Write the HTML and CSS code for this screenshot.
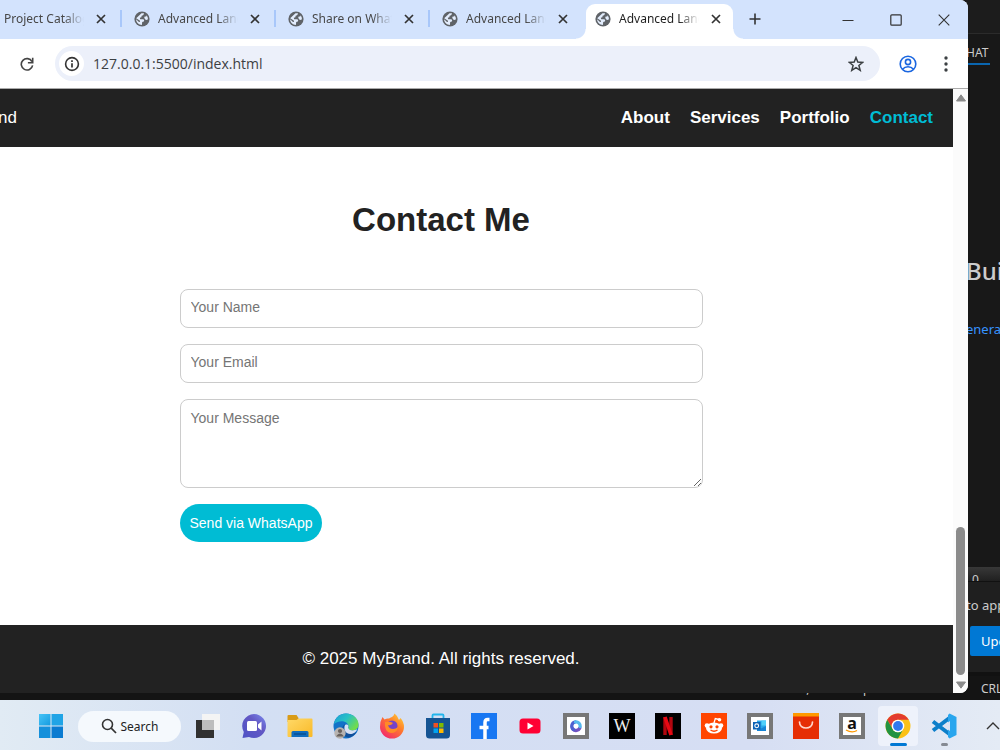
FILE: index.html
```html
<!DOCTYPE html>
<html lang="en">
<head>
<meta charset="utf-8">
<title>Advanced Landing Page</title>
<link rel="stylesheet" href="styles.css">
</head>
<body>
<svg class="defs" aria-hidden="true">
  <symbol id="globe" viewBox="0 0 16 16"><circle cx="8" cy="8" r="7.600" fill="#5f6368"/><path d="M7.500 2.200L10 2.300C9.800 3.800 9 4.600 7.600 4.700L7.400 6.300 5.800 6.700 6.200 8.200 9.300 8.300C10.300 9 10.400 10 9.800 10.600L8.200 11 7.900 13.900C4.800 13.900 2.200 11.400 2.100 8.300L5 10.900 6 10.800 6 9.700 2.200 7.200ZM12.400 4.200C13.500 5.300 14 6.700 13.900 8.300L12.800 8.900 11.200 8.400 10.200 6.700 10.700 5.500 12.300 5.400Z" fill="#e3edfd"/></symbol>
  <symbol id="cross" viewBox="0 0 10 10"><path d="M1 1l8 8M9 1L1 9" stroke="currentColor" stroke-width="1.700" fill="none"/></symbol>
</svg>
<div class="desktop">
  <section class="editor" aria-label="Code editor">
    <aside class="panel">
      <div class="panel-title"></div>
      <div class="panel-head"><span class="panel-tab">HAT</span></div>
      <div class="welcome">
        <h2 class="welcome-title">Bui</h2>
        <a class="welcome-link" href="#generate">enerat</a>
      </div>
      <div class="panel-input">0</div>
      <div class="notice">
        <p class="notice-text">to app</p>
        <button class="notice-button" type="button">Upd</button>
      </div>
    </aside>
    <div class="status"><span>Ln 283, Col 8</span><span>Spaces: 4</span><span>UTF-8</span><span class="eol">CRL</span></div>
  </section>

  <section class="browser" aria-label="Browser window">
    <div class="tabs">
      <div class="tab first"><span class="tab-label">Project Catalog</span><button class="tab-close" aria-label="Close tab"><svg><use href="#cross"/></svg></button></div>
      <div class="tab"><svg class="favicon"><use href="#globe"/></svg><span class="tab-label">Advanced Land</span><button class="tab-close" aria-label="Close tab"><svg><use href="#cross"/></svg></button></div>
      <div class="tab"><svg class="favicon"><use href="#globe"/></svg><span class="tab-label">Share on What</span><button class="tab-close" aria-label="Close tab"><svg><use href="#cross"/></svg></button></div>
      <div class="tab plain"><svg class="favicon"><use href="#globe"/></svg><span class="tab-label">Advanced Land</span><button class="tab-close" aria-label="Close tab"><svg><use href="#cross"/></svg></button></div>
      <div class="tab active"><svg class="favicon"><use href="#globe"/></svg><span class="tab-label">Advanced Land</span><button class="tab-close" aria-label="Close tab"><svg><use href="#cross"/></svg></button></div>
      <button class="new-tab" aria-label="New tab"><svg width="12" height="12" viewBox="0 0 12 12"><path d="M6 .5v11M.5 6h11" stroke="#333" stroke-width="1.600"/></svg></button>
      <div class="window-controls">
        <button aria-label="Minimize"><svg width="12" height="12" viewBox="0 0 12 12"><path d="M.5 6.500h11" stroke="#333" stroke-width="1.200"/></svg></button>
        <button aria-label="Maximize"><svg width="12" height="12" viewBox="0 0 12 12"><rect x=".8" y=".8" width="10.400" height="10.400" rx="1" fill="none" stroke="#333" stroke-width="1.200"/></svg></button>
        <button aria-label="Close"><svg width="12" height="12" viewBox="0 0 12 12"><path d="M.7 .7l10.600 10.600M11.300 .7L.7 11.300" stroke="#333" stroke-width="1.100"/></svg></button>
      </div>
    </div>
    <div class="toolbar">
      <button class="tool reload" aria-label="Reload"><svg width="14" height="14" viewBox="0 0 14 14"><path d="M12 4.600A5.700 5.700 0 1 0 12.600 8.300" fill="none" stroke="#444" stroke-width="1.600"/><path d="M12.700 .8v5H7.900" fill="none" stroke="#444" stroke-width="1.600"/></svg></button>
      <div class="omnibox">
        <button class="site-info" aria-label="Site information"><svg width="16" height="16" viewBox="0 0 16 16"><circle cx="8" cy="8" r="6.400" fill="none" stroke="#333" stroke-width="1.600"/><path d="M8 7.200v4.300M8 4.300v1.700" stroke="#333" stroke-width="1.700"/></svg></button>
        <input class="address" aria-label="Address" value="127.0.0.1:5500/index.html">
        <button class="tool star" aria-label="Bookmark"><svg width="16" height="16" viewBox="0 0 16 16"><path d="M8 1.500l1.800 4.600 4.900.3-3.800 3.100 1.300 4.800L8 11.600l-4.200 2.700 1.300-4.800L1.300 6.400l4.900-.3z" fill="none" stroke="#3c4043" stroke-width="1.500"/></svg></button>
      </div>
      <button class="tool avatar" aria-label="Profile"><svg width="18" height="18" viewBox="0 0 18 18" fill="none" stroke="#1a66e0" stroke-width="1.600"><circle cx="9" cy="9" r="7.800"/><circle cx="9" cy="7" r="2.600"/><path d="M3.500 14.200c3-3.200 8-3.200 11 0"/></svg></button>
      <button class="tool menu" aria-label="Menu"><svg width="4" height="16" viewBox="0 0 4 16" fill="#3c4043"><circle cx="2" cy="2" r="1.700"/><circle cx="2" cy="8" r="1.700"/><circle cx="2" cy="14" r="1.700"/></svg></button>
    </div>
    <div class="viewport">
      <div class="page-clip">
        <div class="page">
          <header class="site-header">
            <span class="brand">MyBrand</span>
            <nav class="site-nav"><a href="#about">About</a><a href="#services">Services</a><a href="#portfolio">Portfolio</a><a class="current" href="#contact">Contact</a></nav>
          </header>
          <main class="contact">
            <h1 class="contact-title">Contact Me</h1>
            <form class="contact-form">
              <input class="field" type="text" placeholder="Your Name" aria-label="Your Name">
              <input class="field" type="email" placeholder="Your Email" aria-label="Your Email">
              <textarea class="field message" placeholder="Your Message" aria-label="Your Message"></textarea>
              <button class="send" type="button">Send via WhatsApp</button>
            </form>
          </main>
          <footer class="site-footer">© 2025 MyBrand. All rights reserved.</footer>
        </div>
      </div>
      <div class="scrollbar" aria-hidden="true">
        <svg width="12" height="8" viewBox="0 0 12 8"><path d="M6 .8L10.500 7h-9z" fill="#8b8b8b" stroke="#8b8b8b" stroke-linejoin="round"/></svg>
        <div class="thumb"></div>
        <svg width="12" height="8" viewBox="0 0 12 8"><path d="M6 7.200L10.500 1h-9z" fill="#8b8b8b" stroke="#8b8b8b" stroke-linejoin="round"/></svg>
      </div>
    </div>
  </section>
</div>

<footer class="taskbar">
  <button class="app" aria-label="Start"><svg viewBox="0 0 26 26"><defs><linearGradient id="win" x1="0" y1="0" x2="1" y2="1" gradientUnits="objectBoundingBox"><stop offset="0" stop-color="#46c4f7"/><stop offset="1" stop-color="#149be0"/></linearGradient></defs><path d="M1 1h11.500v11.500H1z" fill="url(#win)"/><path d="M13.500 1H25v11.500H13.500z" fill="#20a4e6"/><path d="M1 13.500h11.500V25H1z" fill="#1590db"/><path d="M13.500 13.500H25V25H13.500z" fill="#0a7bd1"/></svg></button>
  <button class="search"><svg width="16" height="16" viewBox="0 0 16 16"><circle cx="6.500" cy="6.500" r="5" fill="none" stroke="#333" stroke-width="1.600"/><path d="M10.200 10.200L15 15" stroke="#333" stroke-width="1.700"/></svg><span>Search</span></button>
  <button class="app" aria-label="Task view"><svg viewBox="0 0 26 26"><path d="M1 7h18v18H1z" fill="#303030"/><path d="M7 1h18v16H7z" fill="#f4f4f4"/><path d="M7 7h12v10H7z" fill="#bdbdbd"/></svg></button>
  <button class="app" aria-label="Chat"><svg viewBox="0 0 26 26"><defs><linearGradient id="chat" x1="0" y1="1" x2="1" y2="0"><stop stop-color="#4e52c5"/><stop offset=".6" stop-color="#6358c4"/><stop offset="1" stop-color="#7b8df0"/></linearGradient></defs><path d="M13 1a12 12 0 1 1-5 22.900L1.500 25l1.300-6A12 12 0 0 1 13 1z" fill="url(#chat)"/><rect x="6" y="8" width="10" height="10" rx="1.500" fill="#fff"/><path d="M17 11.500l3.500-3v9l-3.500-3z" fill="#fff"/></svg></button>
  <button class="app" aria-label="Files"><svg viewBox="0 0 26 26"><defs><linearGradient id="fold" x1="0" y1="0" x2="1" y2="1"><stop stop-color="#ffd968"/><stop offset="1" stop-color="#f9b927"/></linearGradient></defs><path d="M.5 3q0-1 1-1h8l2 3v4H.5z" fill="#d99b16"/><path d="M.5 7h9l2-1.500h13q1 0 1 1V23q0 1-1 1H1.500q-1 0-1-1z" fill="url(#fold)"/><path d="M4.500 24v-4.500q0-1.500 1.500-1.500h14q1.500 0 1.500 1.500V24z" fill="#0f6cbd"/><path d="M7 21h12" stroke="#0a4f91" stroke-width="1.500"/></svg></button>
  <button class="app" aria-label="Edge"><svg viewBox="0 0 26 26"><defs><linearGradient id="edge" x1="0" y1="0" x2="1" y2=".6"><stop stop-color="#1d9bd7"/><stop offset=".5" stop-color="#26c1c6"/><stop offset="1" stop-color="#72dc4b"/></linearGradient></defs><circle cx="13" cy="13" r="12.500" fill="#1272c8"/><path d="M1 11C2 4.500 7 .5 13 .5c7 0 12.500 5 12.500 11 0 4-3 6-6.500 6-2.500 0-4.500-1-3.500-3C16.500 9 8 5.500 1 11z" fill="url(#edge)"/><path d="M13 11c-2 1-2.500 3-2 5 .8 4 5.500 6 12.500 3-3 6-10 7-13 3-3-4-1.500-10 2.500-11z" fill="#10509b"/><path d="M12 12c3-1.500 4 1 3.200 2.500 0 3 5.500 4 9 1.500-1 3.500-4 5-7 5-4 0-7-4-5.200-9z" fill="#d6e0f3"/><circle cx="7" cy="20" r="5.700" fill="#b7b3b0"/><circle cx="7" cy="18" r="2.100" fill="#68625e"/><path d="M3 23.500q4-6 8 0z" fill="#68625e"/></svg></button>
  <button class="app" aria-label="Firefox"><svg viewBox="0 0 26 26"><defs><linearGradient id="fox" x1="1" y1="0" x2=".2" y2="1"><stop stop-color="#ffdf38"/><stop offset=".45" stop-color="#ff7c2b"/><stop offset="1" stop-color="#f2256e"/></linearGradient></defs><path d="M3.500 4l2 2.500Q8 5 10 5.500 12 4 13 4q2-1.500 2.500-3.500Q19 3 20 7l1.500-2Q25 9 25 14A12 11.500 0 0 1 1 14q0-6 2.500-10z" fill="url(#fox)"/><circle cx="13" cy="13" r="5.500" fill="#7542c9"/><path d="M6 9q5-1 8 1-2 3-5 2 1 4 5 4 3 0 5-2-1 6-7 6-7-1-6-11z" fill="#ff8b27"/></svg></button>
  <button class="app" aria-label="Store"><svg viewBox="0 0 26 26"><path d="M7.500 6V2.500q0-1 1-1h9q1 0 1 1V6" fill="none" stroke="#22b5ec" stroke-width="1.800"/><path d="M1 5h24v17q0 3.500-3.500 3.500h-17Q1 25.500 1 22z" fill="#155493"/><path d="M8.500 10H13v4.500H8.500z" fill="#f25022"/><path d="M14 10h4.500v4.500H14z" fill="#7fba00"/><path d="M8.500 15.500H13V20H8.500z" fill="#00a4ef"/><path d="M14 15.500h4.500V20H14z" fill="#ffb900"/></svg></button>
  <button class="app" aria-label="Facebook"><svg viewBox="0 0 26 26"><path d="M0 0h26v26H0z" fill="#1877f2"/><path d="M18.500 6.500h-1.800q-2.700 0-2.700 3V26M8.500 14.500h9" fill="none" stroke="#fff" stroke-width="3.500"/></svg></button>
  <button class="app" aria-label="YouTube"><svg viewBox="0 0 26 26"><rect x="2.500" y="5.500" width="21" height="15" rx="3.500" fill="#ff0033"/><path d="M10.500 9.500l6 3.500-6 3.500z" fill="#fff"/></svg></button>
  <button class="app" aria-label="Microsoft 365"><svg viewBox="0 0 26 26"><path d="M0 0h26v26H0z" fill="#777"/><path d="M4 4h18v18H4z" fill="#fff"/><g fill="none" stroke-width="3.300" stroke-linejoin="round" stroke-linecap="round"><path d="M16.800 15A4.200 4.200 0 0 1 10 16.300" stroke="#7252c2"/><path d="M10.500 16.500A4.200 4.200 0 0 1 12 9" stroke="#4e5fd0"/><path d="M12.500 9a4.200 4.200 0 0 1 4.700 4.600" stroke="#55b8ed"/></g></svg></button>
  <button class="app" aria-label="Wikipedia"><span class="wiki">W</span></button>
  <button class="app" aria-label="Netflix"><svg viewBox="0 0 26 26"><path d="M0 0h26v26H0z" fill="#000"/><path d="M10 4v18M16 4v18" stroke="#b1060f" stroke-width="3.400"/><path d="M10 4l6 18" stroke="#e50914" stroke-width="3.600"/></svg></button>
  <button class="app" aria-label="Reddit"><svg viewBox="0 0 26 26"><path d="M0 0h26v26H0z" fill="#ff4500"/><path d="M13 10l1.300-4.500L18 6.500" fill="none" stroke="#fff" stroke-width="1.300"/><circle cx="18.500" cy="6.800" r="1.800" fill="#fff"/><circle cx="6" cy="12.500" r="2.300" fill="#fff"/><circle cx="20" cy="12.500" r="2.300" fill="#fff"/><ellipse cx="13" cy="15" rx="8" ry="5.600" fill="#fff"/><circle cx="10" cy="13.800" r="1.600" fill="#ff4500"/><circle cx="16" cy="13.800" r="1.600" fill="#ff4500"/><path d="M9.500 17q3.500 2.500 7 0" fill="none" stroke="#ff4500" stroke-width="1.300"/></svg></button>
  <button class="app" aria-label="Outlook"><svg viewBox="0 0 26 26"><path d="M0 0h26v26H0z" fill="#777"/><path d="M4 4h18v18H4z" fill="#fff"/><path d="M10 7.500h9V18h-9z" fill="#28a8ea"/><path d="M14.500 7.500H19v5h-4.500z" fill="#50d0fa"/><path d="M10 14l4 1.500 5-2.500v5h-9z" fill="#1484d6"/><path d="M6 9h7.500v7.500H6z" fill="#0b62b5"/><circle cx="9.700" cy="12.800" r="1.900" fill="none" stroke="#fff" stroke-width="1.100"/></svg></button>
  <button class="app" aria-label="AliExpress"><svg viewBox="0 0 26 26"><path d="M0 0h26v26H0z" fill="#e62e04"/><path d="M0 0h26v3.500H0z" fill="#ff9900"/><path d="M6.500 9c0 8 13 8 13 0" fill="none" stroke="#ffd7ca" stroke-width="1.700" stroke-linecap="round"/></svg></button>
  <button class="app" aria-label="Amazon"><span class="amazon">a<svg width="14" height="4" viewBox="0 0 14 4"><path d="M1 1q6 3.500 11 .5" fill="none" stroke="#ff9900" stroke-width="1.400"/></svg></span></button>
  <button class="app running focused" aria-label="Chrome"><svg viewBox="0 0 26 26"><circle cx="13" cy="13" r="12.500" fill="#fbc116"/><path d="M2.200 6.800A12.500 12.500 0 0 1 23.800 6.800H13a6.200 6.200 0 0 0-5.400 9.300z" fill="#e33b2e"/><path d="M2.200 6.800A12.500 12.500 0 0 0 13 25.500L18.400 16.100a6.200 6.200 0 0 1-10.800 0z" fill="#229342"/><circle cx="13" cy="13" r="6.300" fill="#fff"/><circle cx="13" cy="13" r="4.900" fill="#3079ee"/></svg></button>
  <button class="app running" aria-label="Visual Studio Code"><svg viewBox="0 0 26 26"><path d="M2 8.500L19 21.500M2 17.500L19 4.500" stroke="#0d7fca" stroke-width="4"/><path d="M18.500.5L25.500 4v18l-7 3.500L17 24V2z" fill="#29a6ee"/><path d="M19 8v10l-7-5z" fill="#dce3f4"/></svg></button>
  <button class="tray" aria-label="Show hidden icons"><svg width="14" height="10" viewBox="0 0 14 10"><path d="M1 8l6-6 6 6" fill="none" stroke="#333" stroke-width="1.400"/></svg></button>
</footer>
</body>
</html>
```
FILE: styles.css
```css
* { box-sizing: border-box; }
body {
  margin: 0;
  height: 100vh;
  display: flex;
  flex-direction: column;
  overflow: hidden;
  font-family: "Noto Sans", "Open Sans", sans-serif;
  font-size: 12px;
}
button { padding: 0; border: 0; background: none; color: inherit; font: inherit; }
svg { display: block; }
.defs { position: absolute; width: 0; height: 0; }
.desktop { position: relative; flex: 1; min-height: 0; }

/* Editor behind the browser */
.editor {
  position: absolute;
  inset: 0;
  display: flex;
  flex-direction: column;
  background: #181818;
  color: #ccc;
  white-space: nowrap;
  overflow: hidden;
}
.panel { flex: 1; display: flex; flex-direction: column; width: 34px; margin-left: auto; overflow: hidden; }
.panel-title { height: 34px; background: #1c1c1c; border-bottom: 1px solid #2b2b2b; }
.panel-head { height: 31px; display: flex; }
.panel-tab { width: 24px; padding-top: 10px; line-height: 18px; border-bottom: 2px solid #0a66b0; }
.welcome { flex: 1; padding-top: 190px; }
.welcome-title { margin: 0 0 32px; font-size: 24px; font-weight: 500; line-height: 32px; }
.welcome-link { display: block; font-size: 13px; line-height: 20px; color: #3794ff; text-decoration: none; }
.panel-input {
  height: 15px;
  padding: 5px 0 0 6px;
  font-size: 12px;
  line-height: 16px;
  overflow: hidden;
  background: linear-gradient(#383838, #202020);
  border-bottom: 1px solid #111;
}
.notice { height: 90px; padding-top: 13px; background: #1f1f1f; font-size: 13px; }
.notice-text { margin: 0 0 11px; line-height: 20px; }
.notice-button { display: block; height: 30px; width: 40px; margin-left: 4px; padding-left: 11px; text-align: left; background: #0078d4; color: #fff; border-radius: 2px; }
.status {
  height: 28px;
  display: flex;
  justify-content: flex-end;
  align-items: center;
  gap: 16px;
  border-top: 4px solid #111;
  background: #141414;
}
.eol { width: 19px; margin-left: 8px; overflow: hidden; }

/* Browser window */
.browser {
  position: absolute;
  inset: 0 32px 7px 0;
  display: flex;
  flex-direction: column;
  overflow: hidden;
  background: #fff;
  border-radius: 0 8px 8px 0;
}
.tabs { display: flex; height: 39px; background: #d3e3fd; color: #474747; }
.tab { position: relative; flex: 0 0 154px; display: flex; align-items: center; height: 37px; padding-left: 12px; }
.tab::after { content: ""; position: absolute; right: 0; top: 10px; width: 2px; height: 17px; background: #a8c7fa; }
.tab.plain { flex-basis: 156px; }
.tab.plain::after { display: none; }
.tab.first { flex-basis: 122px; padding-left: 4px; }
.favicon { width: 16px; height: 16px; margin-right: 8px; }
.tab-label {
  width: 80px;
  overflow: hidden;
  white-space: nowrap;
  -webkit-mask-image: linear-gradient(90deg, #000 60px, transparent 80px);
  mask-image: linear-gradient(90deg, #000 60px, transparent 80px);
}
.tab-close { margin-left: 12px; color: #333; }
.tab-close svg { width: 10px; height: 10px; }
.tab.active {
  flex-basis: 147px;
  height: 35px;
  margin-top: 4px;
  padding: 0 0 6px 9px;
  background: #fff;
  color: #1f1f1f;
  border-radius: 9px 9px 0 0;
}
.tab.active::before, .tab.active::after {
  content: "";
  position: absolute;
  top: auto;
  bottom: 0;
  width: 10px;
  height: 10px;
  background: radial-gradient(circle at 0 0, transparent 9px, #fff 10px);
}
.tab.active::before { left: -10px; }
.tab.active::after { right: -10px; background: radial-gradient(circle at 100% 0, transparent 9px, #fff 10px); }
.new-tab { height: 37px; margin-left: 16px; }
.window-controls { display: flex; gap: 36px; margin-left: auto; padding-right: 18px; }
.toolbar { display: flex; align-items: center; height: 50px; border-bottom: 1px solid #aaa; }
.tool { display: grid; place-items: center; width: 28px; height: 28px; }
.reload { margin-left: 13px; }
.omnibox { flex: 1; display: flex; align-items: center; height: 35px; margin-left: 14px; padding: 0 10px 0 4px; border-radius: 18px; background: #ecf0fa; }
.site-info { display: grid; place-items: center; width: 25px; height: 25px; border-radius: 50%; background: #fff; }
.address { flex: 1; padding: 0; margin-left: 9px; border: 0; outline: 0; background: none; font: 14px "Open Sans", sans-serif; color: #3c4043; }
.avatar { margin-left: 14px; }
.menu { margin: 0 8px 0 10px; }
.viewport { flex: 1; display: flex; min-height: 0; }
.page-clip { flex: 1; overflow: hidden; display: flex; }
.scrollbar { width: 15px; display: flex; flex-direction: column; align-items: center; padding: 5px 0 4px; background: #fbfbfb; }
.thumb { width: 9px; height: 148px; margin: auto 0 6px; border-radius: 5px; background: #8b8b8b; }

/* Site, scrolled sideways inside its viewport */
.page { flex: 1; display: flex; flex-direction: column; margin-left: -71px; font-family: "Liberation Sans", Arial, sans-serif; font-size: 17px; }
.site-header { display: flex; align-items: center; justify-content: space-between; height: 58px; padding: 0 20px; background: #222; color: #fff; }
.site-nav { display: flex; gap: 20px; font-weight: 700; }
.site-nav a { color: #fff; text-decoration: none; }
.site-nav .current { color: #00bcd4; }
.contact { flex: 1; padding-top: 54px; }
.contact-title { margin: 0 0 50px; font-size: 33px; line-height: 38px; text-align: center; color: #222; }
.contact-form { display: flex; flex-direction: column; align-items: flex-start; gap: 16px; width: 523px; margin: 0 auto; }
.field { width: 100%; height: 39px; padding: 8px 10px 11px; border: 1px solid #ccc; border-radius: 8px; background: #fff; font: 14px "Liberation Sans", Arial, sans-serif; }
.field::placeholder { color: #757575; }
.message { display: block; height: 89px; padding: 10px; }
.send { height: 38px; padding: 0 10px; border-radius: 19px; background: #00bcd4; color: #fff; font-size: 14px; }
.site-footer { height: 68px; line-height: 68px; text-align: center; background: #222; color: #fff; }

/* Taskbar */
.taskbar {
  display: flex;
  align-items: center;
  height: 50px;
  padding: 2px 0 0 28px;
  overflow: hidden;
  background: linear-gradient(90deg, #e1ebf4, #d3dff3 25%, #d6def3 75%, #e4ebf5);
}
.app { position: relative; flex: 0 0 46px; display: grid; place-items: center; height: 40px; }
.app > svg { position: relative; width: 26px; height: 26px; }
.search { flex: 0 0 103px; display: flex; align-items: center; justify-content: center; gap: 4px; height: 31px; margin: 0 4px; border-radius: 16px; background: #f5f9fd; color: #222; }
.wiki { width: 26px; height: 26px; background: #000; color: #eee; font: 18px/26px "Liberation Serif", serif; }
.amazon { display: grid; justify-items: center; align-content: start; width: 26px; height: 26px; border: 4px solid #777; background: #fff; color: #111; font: 700 16px/12px "Noto Sans", sans-serif; }
.focused::before { content: ""; position: absolute; inset: 0 3px; border-radius: 4px; background: #eef2fb; }
.running::after { content: ""; position: absolute; left: 20px; bottom: 0; width: 7px; height: 3px; border-radius: 2px; background: #858a93; }
.focused::after { left: 15px; width: 17px; background: #0078d4; }
.tray { margin-left: 19px; flex: none; }
```
